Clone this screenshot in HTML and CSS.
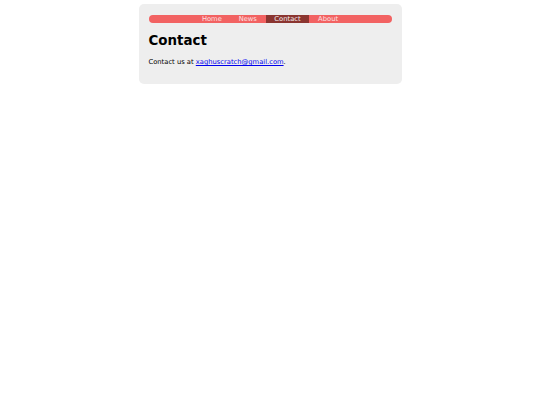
FILE: index.html
```html
<!DOCTYPE html>
<html lang="en">
<head>
<meta charset="utf-8">
<title>Contact</title>
<link rel="stylesheet" href="styles.css">
</head>
<body>
<div class="page">
  <nav class="nav">
    <a class="nav-item" href="#">Home</a>
    <a class="nav-item" href="#">News</a>
    <a class="nav-item active" href="#">Contact</a>
    <a class="nav-item" href="#">About</a>
  </nav>
  <h1 class="title">Contact</h1>
  <p class="text">Contact us at <a class="mail" href="#">xaghuscratch@gmail.com</a>.</p>
</div>
</body>
</html>
```
FILE: styles.css
```css
html, body {
  margin: 0;
  padding: 0;
  background: #ffffff;
}
body {
  font-family: "DejaVu Sans", Verdana, sans-serif;
  font-size: 6.75px;
  color: #000;
}
.page {
  width: 243px;
  margin: 4px auto 0;
  padding: 10.5px 10px 10px;
  background: #eeeeee;
  border-radius: 5px;
}
.nav {
  display: flex;
  justify-content: center;
  gap: 2.2px;
  height: 8.5px;
  background: #f26262;
  border-radius: 4px;
  overflow: hidden;
}
.nav-item {
  display: block;
  padding: 0 7.3px;
  line-height: 8.5px;
  color: #fde0e0;
  text-decoration: none;
}
.nav-item.active {
  background: #8b3530;
  color: #f5eeee;
  padding: 0 8px;
}
.title {
  font-size: 13.4px;
  font-weight: bold;
  margin: 9.5px 0 11px;
  line-height: 1.164;
}
.text {
  margin: 0 0 6.7px;
  line-height: 1.164;
}
.mail {
  color: #0000ee;
}
```
